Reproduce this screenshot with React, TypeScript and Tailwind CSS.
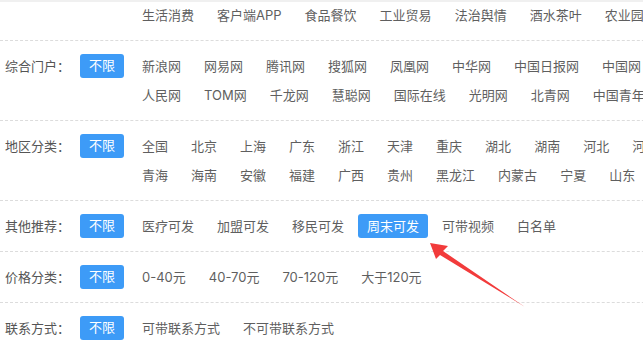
type FilterRow = {
  label?: string;
  lines: string[][];
  selected?: string;
};

const topRow: FilterRow = {
  lines: [["生活消费", "客户端APP", "食品餐饮", "工业贸易", "法治舆情", "酒水茶叶", "农业园林"]],
};

const rows: FilterRow[] = [
  {
    label: "综合门户：",
    lines: [
      ["新浪网", "网易网", "腾讯网", "搜狐网", "凤凰网", "中华网", "中国日报网", "中国网"],
      ["人民网", "TOM网", "千龙网", "慧聪网", "国际在线", "光明网", "北青网", "中国青年网"],
    ],
  },
  {
    label: "地区分类：",
    lines: [
      ["全国", "北京", "上海", "广东", "浙江", "天津", "重庆", "湖北", "湖南", "河北", "河南"],
      ["青海", "海南", "安徽", "福建", "广西", "贵州", "黑龙江", "内蒙古", "宁夏", "山东"],
    ],
  },
  {
    label: "其他推荐：",
    lines: [["医疗可发", "加盟可发", "移民可发", "周末可发", "可带视频", "白名单"]],
    selected: "周末可发",
  },
  {
    label: "价格分类：",
    lines: [["0-40元", "40-70元", "70-120元", "大于120元"]],
  },
  {
    label: "联系方式：",
    lines: [["可带联系方式", "不可带联系方式"]],
  },
];

function Row({ row, first }: { row: FilterRow; first?: boolean }) {
  return (
    <div
      className={`flex border-b border-dashed border-[#dcdcdc] ${
        first ? "pt-[1px]" : "pt-[13px]"
      } pb-[13px]`}
    >
      <div className="w-[80px] shrink-0 pl-[5px] text-[#555] leading-[24px]">
        {row.label}
      </div>
      <div className="w-[44px] shrink-0">
        {row.label ? (
          <span className="flex h-[24px] w-[44px] items-center justify-center rounded-[3px] bg-[#3d9bf7] text-white">
            不限
          </span>
        ) : null}
      </div>
      <div className="ml-[9px] flex flex-col gap-[5px]">
        {row.lines.map((line, i) => (
          <div key={i} className="flex gap-[5px] whitespace-nowrap">
            {line.map((item) => (
              <span
                key={item}
                className={`h-[24px] rounded-[3px] px-[9px] leading-[24px] ${
                  item === row.selected ? "bg-[#3d9bf7] text-white" : "text-[#5f5f5f]"
                }`}
              >
                {item}
              </span>
            ))}
          </div>
        ))}
      </div>
    </div>
  );
}

export default function App() {
  return (
    <div
      className="relative h-[341px] w-[643px] overflow-hidden border-t-2 border-[#f0f0f0] bg-white text-[13px]"
      style={{ fontFamily: 'Inter, "Noto Sans CJK SC", sans-serif' }}
    >
      <div className="w-[700px]">
        <Row row={topRow} first />
        {rows.map((row) => (
          <Row key={row.label} row={row} />
        ))}
      </div>
      <svg
        className="pointer-events-none absolute left-0 top-[-2px]"
        width="643"
        height="341"
        viewBox="0 0 643 341"
      >
        <polygon
          points="430,243 448,246 443,251 525,307 440,255 436,259"
          fill="#f23b3b"
        />
      </svg>
    </div>
  );
}
